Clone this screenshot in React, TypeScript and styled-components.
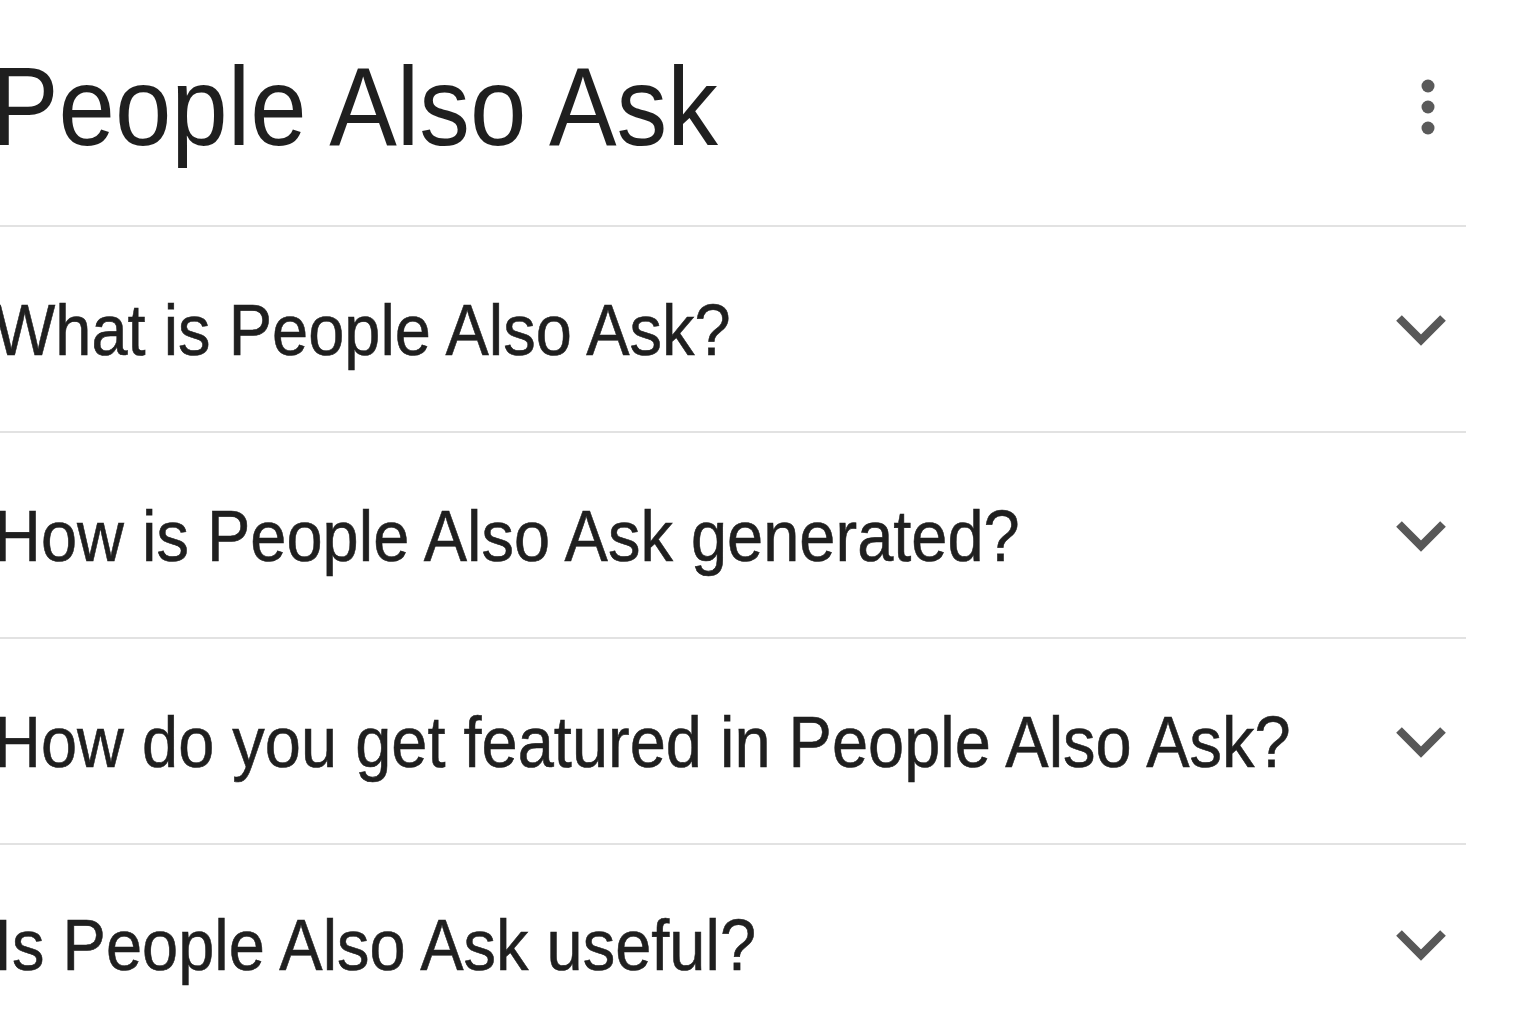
import React, { FC } from 'react';
import styled, { createGlobalStyle } from 'styled-components';

const GlobalStyle = createGlobalStyle`
  html, body {
    margin: 0;
    padding: 0;
    background: #ffffff;
  }
  body {
    font-family: 'Liberation Sans', Arial, Helvetica, sans-serif;
    color: #1f1f1f;
  }
`;

const questions: string[] = [
  'What is People Also Ask?',
  'How is People Also Ask generated?',
  'How do you get featured in People Also Ask?',
  'Is People Also Ask useful?'
];

const ChevronIcon: FC = () => (
  <svg width="56" height="36" viewBox="0 0 56 36" aria-hidden="true">
    <path d="M6 7 L28 29 L50 7" fill="none" stroke="#585858" strokeWidth="8" strokeLinejoin="miter" />
  </svg>
);

const KebabIcon: FC = () => (
  <svg width="16" height="58" viewBox="0 0 16 58" aria-hidden="true">
    <circle cx="8" cy="8" r="6.5" fill="#5a5a5a" />
    <circle cx="8" cy="29" r="6.5" fill="#5a5a5a" />
    <circle cx="8" cy="50" r="6.5" fill="#5a5a5a" />
  </svg>
);

const App: FC = () => {
  return (
    <>
      <GlobalStyle />
      <Panel>
        <Header>
          <Title>People Also Ask</Title>
          <MenuButton aria-label="More options">
            <KebabIcon />
          </MenuButton>
        </Header>
        {questions.map((question) => (
          <QuestionRow key={question}>
            <QuestionText>{question}</QuestionText>
            <ChevronButton aria-label="Expand">
              <ChevronIcon />
            </ChevronButton>
          </QuestionRow>
        ))}
      </Panel>
    </>
  );
};

export default App;

const Panel = styled.div`
  width: 1472px;
  margin-left: -6px;
  overflow: hidden;
`;

const Header = styled.header`
  display: flex;
  align-items: center;
  justify-content: space-between;
  height: 227px;
  padding-bottom: 12px;
  box-sizing: border-box;
  border-bottom: 2px solid #e2e2e2;
`;

// the source face is a narrow grotesque; Arial metrics squeezed to match
const Title = styled.h1`
  flex: 1;
  min-width: 0;
  margin: 0 0 0 -3px;
  font-size: 112px;
  font-weight: 400;
  line-height: 1;
  white-space: nowrap;
  transform: scaleX(0.905);
  transform-origin: left center;
`;

const MenuButton = styled.div`
  display: flex;
  flex-shrink: 0;
  margin-right: 30px;
`;

const QuestionRow = styled.div`
  display: flex;
  align-items: center;
  justify-content: space-between;
  height: 206px;
  box-sizing: border-box;
  border-bottom: 2px solid #e2e2e2;

  &:last-child {
    border-bottom: none;
    padding-bottom: 8px;
  }
`;

const QuestionText = styled.span`
  flex: 1;
  min-width: 0;
  font-size: 73px;
  font-weight: 400;
  line-height: 1;
  white-space: nowrap;
  transform: scaleX(0.89);
  transform-origin: left center;
  -webkit-text-stroke: 0.6px #1f1f1f;
`;

const ChevronButton = styled.div`
  display: flex;
  flex-shrink: 0;
  margin-right: 17px;
`;
